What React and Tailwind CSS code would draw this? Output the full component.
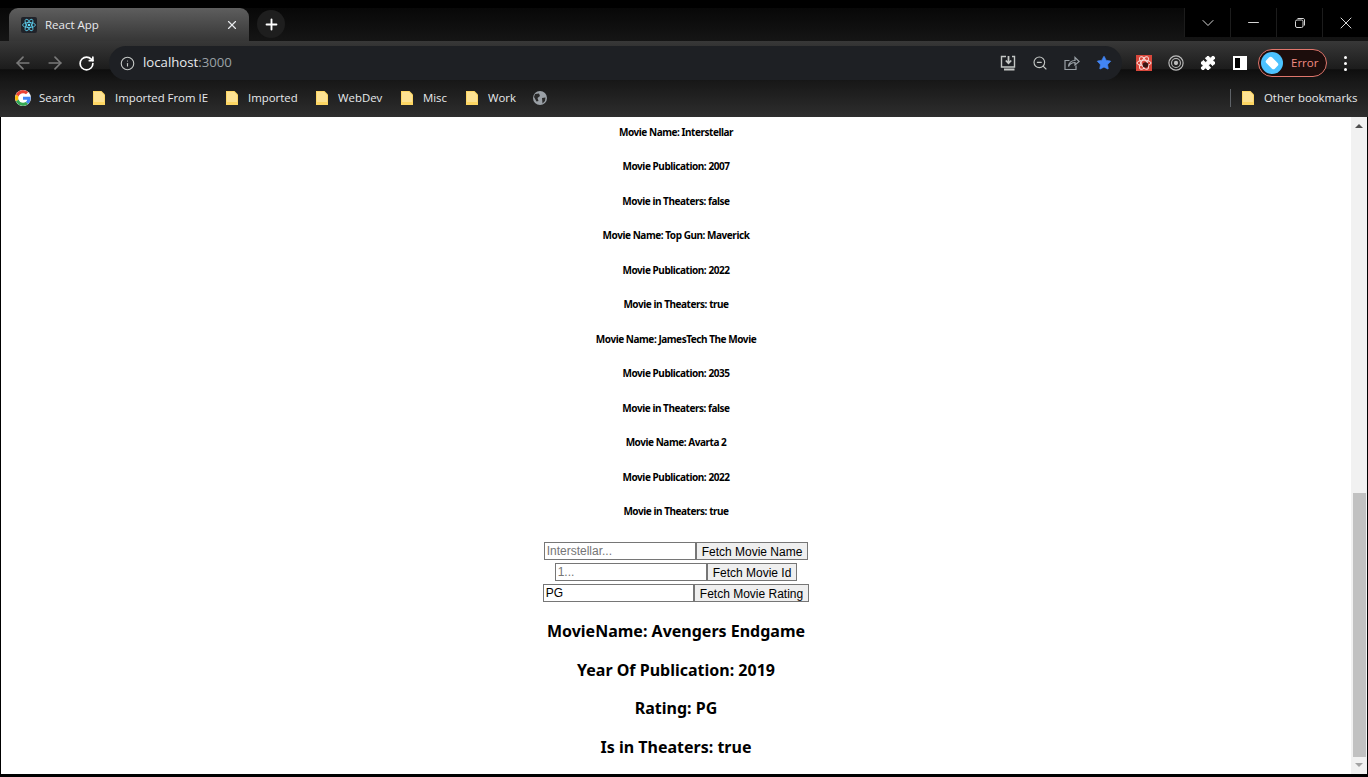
import React from "react";
import { ArrowLeft, ArrowRight, RotateCw, Info, X, Plus, ZoomOut, Star, Puzzle, ChevronDown, Minus } from "lucide-react";

const movies = [
	["Interstellar", "2007", "false"],
	["Top Gun: Maverick", "2022", "true"],
	["JamesTech The Movie", "2035", "false"],
	["Avarta 2", "2022", "true"],
];

const bookmarks = [
	{ name: "Imported From IE", width: "w-[92px]" },
	{ name: "Imported", width: "w-[49px]" },
	{ name: "WebDev", width: "w-[44px]" },
	{ name: "Misc", width: "w-[24px]" },
	{ name: "Work", width: "w-[29px]" },
];

const Folder = () => (
	<svg width="12" height="14" viewBox="0 0 12 14" className="shrink-0">
		<path d="M0 0H8.5L12 3.5V14H0Z" fill="#fdd663" />
		<path d="M1 1H8L11 4V11H1Z" fill="#fde293" />
	</svg>
);

const GoogleIcon = () => (
	<svg width="16" height="16" viewBox="0 0 48 48" className="shrink-0 rounded-full bg-white">
		<path fill="#EA4335" d="M24 9.5c3.5 0 6.7 1.3 9.1 3.5l6.8-6.8C35.800 2.400 30.200 0 24 0 14.600 0 6.500 5.400 2.600 13.200l7.900 6.200C12.400 13.600 17.700 9.500 24 9.500z" />
		<path fill="#4285F4" d="M47 24.500c0-1.600-.1-3.100-.4-4.500H24v9h12.900c-.6 3-2.200 5.500-4.800 7.200l7.700 6c4.500-4.200 7.200-10.300 7.200-17.700z" />
		<path fill="#FBBC05" d="M10.500 28.600A14.500 14.500 0 0 1 10.500 19.400l-7.900-6.200a24 24 0 0 0 0 21.600z" />
		<path fill="#34A853" d="M24 48c6.500 0 11.900-2.100 15.900-5.800l-7.700-6c-2.200 1.500-4.900 2.300-8.100 2.300-6.300 0-11.600-4.100-13.500-9.900l-7.900 6.200C6.500 42.600 14.600 48 24 48z" />
	</svg>
);

const ReactIcon = () => (
	<div className="flex h-4 w-4 shrink-0 items-center justify-center rounded-[2px] bg-[#20232a]">
		<svg width="14" height="14" viewBox="-12 -12 24 24" fill="none" stroke="#61dafb" strokeWidth="1.3">
			<circle r="2.2" fill="#61dafb" stroke="none" />
			<ellipse rx="11" ry="4.4" />
			<ellipse rx="11" ry="4.4" transform="rotate(60)" />
			<ellipse rx="11" ry="4.4" transform="rotate(120)" />
		</svg>
	</div>
);

const InstallIcon = () => (
	<svg width="16" height="16" viewBox="0 0 16 16" fill="none" stroke="#c4c7c5" strokeWidth="1.4">
		<path d="M6 1.500H1.500V12H14.500V1.500H12" />
		<path d="M8.500 1V8M5.800 5.500L8.500 8.300L11.200 5.500" strokeWidth="1.8" />
		<path d="M4 14.500H14.500" strokeWidth="2" />
	</svg>
);

// chrome's share icon, box with an arrow leaving to the right
const ShareIcon = () => (
	<svg width="16" height="16" viewBox="0 0 16 16" fill="none" stroke="#9aa0a6" strokeWidth="1.2">
		<path d="M5.500 5.500H1V14.500H12V10.500" />
		<path d="M4.500 11.500C5 7.500 7.500 5.500 11 5.500V2.500L15.200 6.500L11 10V7.500C8.500 7.500 6 8.500 4.500 11.500Z" />
	</svg>
);

const RadarIcon = () => (
	<svg width="16" height="16" viewBox="0 0 18 18" fill="none" stroke="#bdbdbd">
		<circle cx="9" cy="9" r="8" strokeWidth="1.3" />
		<circle cx="9" cy="9" r="5" strokeWidth="1.2" />
		<circle cx="9" cy="9" r="2.400" fill="#bdbdbd" stroke="none" />
	</svg>
);

const BugExtension = () => (
	<svg width="16" height="16" viewBox="0 0 16 16" className="shrink-0">
		<rect width="16" height="16" fill="#d8473b" />
		<g fill="none" stroke="#fbe0dc" strokeWidth="1">
			<ellipse cx="8" cy="8" rx="7" ry="2.800" />
			<ellipse cx="8" cy="8" rx="7" ry="2.800" transform="rotate(60 8 8)" />
			<ellipse cx="8" cy="8" rx="7" ry="2.800" transform="rotate(120 8 8)" />
		</g>
		<circle cx="9.500" cy="10" r="2.800" fill="#3b1512" />
	</svg>
);

const WindowButton = ({ children }) => (
	<div className="flex h-[29px] w-[46px] items-center justify-center border-l border-[#1c1c1c] bg-black text-[#d8d8d8]">
		{children}
	</div>
);

const TabStrip = () => (
	<div className="flex h-[33px] items-end bg-gradient-to-b from-[#080808] to-[#151515] pl-[9px]">
		<div className="flex h-[33px] w-[240px] items-center rounded-t-[9px] bg-gradient-to-b from-[#5e5e5e] to-[#363636] pl-3 pr-[10px]">
			<ReactIcon />
			<span className="ml-2 font-['Open_Sans',sans-serif] text-[11.5px] text-[#e8eaed]">React App</span>
			<X size={14} strokeWidth={2} className="ml-auto text-[#e8eaed]" />
		</div>
		<div className="mb-[3px] ml-2 flex h-[28px] w-[28px] items-center justify-center rounded-full bg-[#1e1e1e]">
			<Plus size={17} strokeWidth={2.6} className="text-white" />
		</div>
		<div className="mb-1 ml-auto flex self-start">
			<WindowButton><ChevronDown size={20} strokeWidth={1.2} /></WindowButton>
			<WindowButton><Minus size={17} strokeWidth={1.4} /></WindowButton>
			<WindowButton>
				<svg width="12" height="12" viewBox="0 0 12 12" fill="none" stroke="currentColor">
					<rect x="1.500" y="3" width="7.500" height="7.500" rx="1.500" />
					<path d="M3.500 1.500H9C10 1.500 10.500 2 10.500 3V8.500" />
				</svg>
			</WindowButton>
			<WindowButton><X size={20} strokeWidth={1.2} /></WindowButton>
		</div>
	</div>
);

const Toolbar = () => (
	<div className="flex h-[41px] items-center bg-[linear-gradient(#383838_0%,#1c1c1c_68%,#0e0e0e_70%,#181818_100%)] pl-[13px] pt-[3px]">
		<ArrowLeft size={20} strokeWidth={2} className="text-[#7a7a7a]" />
		<ArrowRight size={20} strokeWidth={2} className="ml-3 text-[#7a7a7a]" />
		<RotateCw size={17} strokeWidth={2.4} className="ml-[13px] text-white" />
		<div className="ml-[14px] flex h-[34px] w-[1013px] items-center rounded-full bg-[#1e2024] pl-[11px] pr-[10px]">
			<Info size={15} strokeWidth={1.8} className="text-[#c4c7c5]" />
			<span className="ml-[8px] font-['Open_Sans',sans-serif] text-[13.2px] text-[#e8eaed]">
				localhost<span className="text-[#9aa0a6]">:3000</span>
			</span>
			<div className="ml-auto flex items-center gap-4">
				<InstallIcon />
				<ZoomOut size={16} strokeWidth={1.7} className="text-[#c4c7c5]" />
				<ShareIcon />
				<Star size={16} fill="#4285f4" strokeWidth={1} className="text-[#4285f4]" />
			</div>
		</div>
		<div className="ml-[14px]"><BugExtension /></div>
		<div className="ml-4"><RadarIcon /></div>
		<Puzzle size={16} fill="white" strokeWidth={1.5} className="ml-4 text-white" />
		<div className="ml-[17px] h-[14px] w-[14px] border-[2px] border-r-[7px] border-white bg-black" />
		<div className="ml-[11px] flex h-[28px] w-[69px] items-center rounded-full border border-[#e0766c] bg-[#1c0d0c] pl-[2px]">
			<div className="flex h-[22px] w-[22px] items-center justify-center rounded-full bg-[#4cc2ff]">
				<div className="h-[8px] w-[12px] rotate-45 rounded-[2px] bg-white" />
			</div>
			<span className="ml-2 font-['Open_Sans',sans-serif] text-[11.5px] text-[#f28b82]">Error</span>
		</div>
		<div className="ml-[17px] flex flex-col gap-[3px]">
			<div className="h-[3px] w-[3px] rounded-full bg-white" />
			<div className="h-[3px] w-[3px] rounded-full bg-white" />
			<div className="h-[3px] w-[3px] rounded-full bg-white" />
		</div>
	</div>
);

const BookmarksBar = () => (
	<div className="flex h-[35px] items-center bg-gradient-to-b from-[#181818] to-[#2e2e2e] pb-[3px] pl-[15px] font-['Open_Sans',sans-serif] text-[11.4px] whitespace-nowrap text-[#e8eaed]">
		<GoogleIcon />
		<span className="ml-2 w-[35px]">Search</span>
		{bookmarks.map((b) => (
			<div key={b.name} className="ml-[19px] flex items-center">
				<Folder />
				<span className={`ml-[10px] ${b.width}`}>{b.name}</span>
			</div>
		))}
		<svg width="14" height="14" viewBox="0 0 14 14" className="ml-4">
			<circle cx="7" cy="7" r="7" fill="#9aa0a6" />
			<path d="M2 3L6 2.500L7 5L4.500 7L5.500 10L3.500 10.500L1 6ZM9 7L12.500 6.500L12 10L9.500 12.500Z" fill="#2a2a2a" />
		</svg>
		<div className="ml-auto mr-[11px] h-[18px] w-px bg-[#5f6368]" />
		<Folder />
		<span className="ml-[10px] mr-[11px] w-[93px]">Other bookmarks</span>
	</div>
);

const FetchRow = ({ placeholder, value, label, width }) => (
	<div className="mb-[3px] flex h-[18px] justify-center font-['Liberation_Sans',sans-serif] text-[12px]">
		<input
			readOnly
			placeholder={placeholder}
			value={value}
			className={`${width} border border-[#767676] px-[2px] text-black placeholder:text-[#757575]`}
		/>
		<button className="border border-[#767676] bg-[#efefef] px-[5px] pb-[2px] text-black">{label}</button>
	</div>
);

const Scrollbar = () => (
	<div className="flex w-4 shrink-0 flex-col items-center bg-[#f1f1f1]">
		<div className="mt-[7px] h-0 w-0 border-x-4 border-b-4 border-x-transparent border-b-[#505050]" />
		<div className="mt-[365px] h-[264px] w-[13px] bg-[#c1c1c1]" />
		<div className="mt-[6px] h-0 w-0 border-x-4 border-t-4 border-x-transparent border-t-[#a3a3a3]" />
	</div>
);

const App = () => {
	return (
		<div className="flex h-[777px] flex-col overflow-hidden bg-black">
			<div className="h-2 shrink-0" />
			<TabStrip />
			<Toolbar />
			<BookmarksBar />
			<div className="mx-px mb-[3px] flex min-h-0 flex-1 bg-white">
				<div className="min-w-0 flex-1 text-center text-black">
					<div className="-mt-[2px] font-['Noto_Sans',sans-serif] text-[10px] font-bold tracking-[-0.45px]">
						{movies.map((m) => (
							<div key={m[0]}>
								<p className="flex h-[34.5px] items-center justify-center">Movie Name: {m[0]}</p>
								<p className="flex h-[34.5px] items-center justify-center">Movie Publication: {m[1]}</p>
								<p className="flex h-[34.5px] items-center justify-center">Movie in Theaters: {m[2]}</p>
							</div>
						))}
					</div>
					<div className="mt-[13px]">
						<FetchRow placeholder="Interstellar..." label="Fetch Movie Name" width="w-[152px]" />
						<FetchRow placeholder="1..." label="Fetch Movie Id" width="w-[152px]" />
						<FetchRow value="PG" label="Fetch Movie Rating" width="w-[151px]" />
					</div>
					<div className="mt-[9.7px] font-['Noto_Sans',sans-serif] text-[16px] font-bold">
						<h2 className="flex h-[38.7px] items-center justify-center">MovieName: Avengers Endgame</h2>
						<h2 className="flex h-[38.7px] items-center justify-center">Year Of Publication: 2019</h2>
						<h2 className="flex h-[38.7px] items-center justify-center">Rating: PG</h2>
						<h2 className="flex h-[38.7px] items-center justify-center">Is in Theaters: true</h2>
					</div>
				</div>
				<Scrollbar />
			</div>
		</div>
	);
};

export default App;
